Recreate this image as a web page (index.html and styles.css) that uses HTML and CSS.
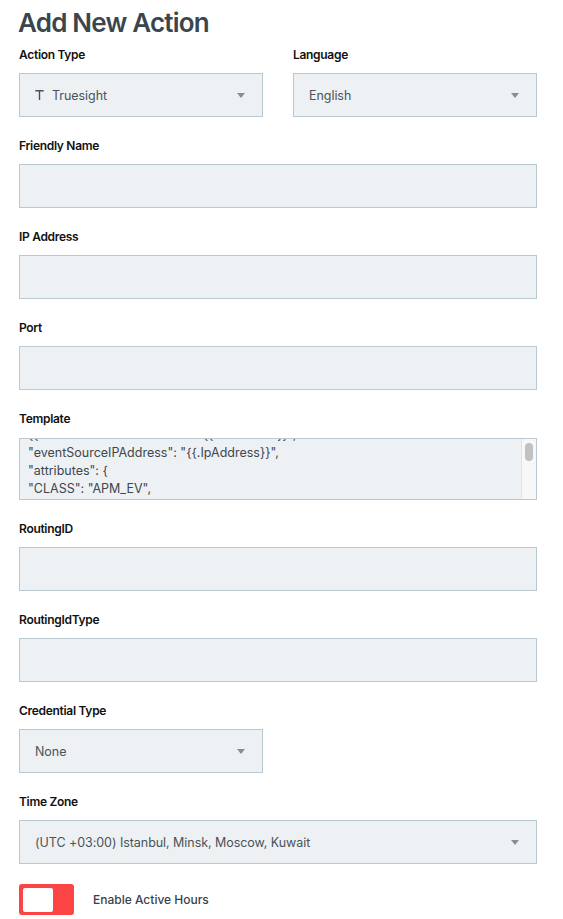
FILE: index.html
```html
<!DOCTYPE html>
<html>
<head>
<meta charset="utf-8">
<link rel="stylesheet" href="styles.css">
</head>
<body>
<div class="page">
  <h1 class="title">Add New Action</h1>
  <div class="form">
    <div class="row two">
      <div class="field">
        <div class="label">Action Type</div>
        <div class="control select">
          <span class="val"><svg class="ticon" width="9" height="10" viewBox="0 0 9 10"><path d="M0.3 0.8H8.7M4.5 0.8V10" stroke="#4a5158" stroke-width="1.4" fill="none"/></svg>Truesight</span>
          <span class="caret"></span>
        </div>
      </div>
      <div class="field">
        <div class="label">Language</div>
        <div class="control select">
          <span class="val">English</span>
          <span class="caret"></span>
        </div>
      </div>
    </div>
    <div class="field">
      <div class="label">Friendly Name</div>
      <div class="control"></div>
    </div>
    <div class="field">
      <div class="label">IP Address</div>
      <div class="control"></div>
    </div>
    <div class="field">
      <div class="label">Port</div>
      <div class="control"></div>
    </div>
    <div class="field">
      <div class="label">Template</div>
      <div class="textarea">
        <div class="ta-view">
          <div class="ta-content">
            <div>{{ "eventSourceHostName": "{{.Hostname}}",</div>
            <div>"eventSourceIPAddress": "{{.IpAddress}}",</div>
            <div>"attributes": {</div>
            <div>"CLASS": "APM_EV",</div>
          </div>
        </div>
        <div class="ta-scroll"><div class="thumb"></div></div>
      </div>
    </div>
    <div class="field">
      <div class="label">RoutingID</div>
      <div class="control"></div>
    </div>
    <div class="field">
      <div class="label">RoutingIdType</div>
      <div class="control"></div>
    </div>
    <div class="field half">
      <div class="label">Credential Type</div>
      <div class="control select">
        <span class="val">None</span>
        <span class="caret"></span>
      </div>
    </div>
    <div class="field">
      <div class="label">Time Zone</div>
      <div class="control select">
        <span class="val">(UTC +03:00) Istanbul, Minsk, Moscow, Kuwait</span>
        <span class="caret"></span>
      </div>
    </div>
    <div class="toggle-row">
      <div class="toggle"><div class="knob"></div></div>
      <span class="toggle-label">Enable Active Hours</span>
    </div>
  </div>
</div>
</body>
</html>
```
FILE: styles.css
```css
* { box-sizing: border-box; }
html, body { margin: 0; padding: 0; background: #fff; }
body { font-family: Inter, "Noto Sans", sans-serif; }
.page { width: 518px; margin-left: 19px; padding-top: 7px; }
.title {
  margin: 0 0 8px -1px;
  font-size: 26px;
  line-height: 32px;
  font-weight: 600;
  color: #3b454d;
  letter-spacing: -0.8px;
}
.form { display: flex; flex-direction: column; gap: 21px; }
.row.two { display: grid; grid-template-columns: 244px 244px; column-gap: 30px; }
.field { display: flex; flex-direction: column; gap: 10px; }
.field.half { width: 244px; }
.label {
  font-size: 12px;
  line-height: 16px;
  font-weight: 600;
  color: #111;
  letter-spacing: -0.3px;
}
.control {
  height: 44px;
  background: #edf1f4;
  border: 1px solid #b9c8d1;
  display: flex;
  align-items: center;
  justify-content: space-between;
  padding: 0 17px 0 15px;
}
.val {
  display: flex;
  align-items: center;
  font-size: 12.5px;
  color: #4b5259;
  letter-spacing: -0.05px;
}
.ticon { margin-right: 8px; margin-top: -1px; }
.caret {
  width: 0; height: 0;
  border-left: 4px solid transparent;
  border-right: 4px solid transparent;
  border-top: 5px solid #8a8d90;
}
.textarea {
  height: 62px;
  margin-top: 1px;
  background: #edf1f4;
  border: 1px solid #b9c8d1;
  display: flex;
}
.ta-view { flex: 1; overflow: hidden; padding-left: 8px; }
.ta-content {
  margin-top: -13px;
  font-size: 12.5px;
  line-height: 18px;
  color: #3f464d;
}
.ta-scroll {
  width: 15px;
  background: #f7f7f7;
  border-left: 1px solid #e3e3e3;
  padding: 4px 0 0 3px;
}
.thumb { width: 8px; height: 18px; border-radius: 4px; background: #c1c1c1; }
.toggle-row { display: flex; align-items: center; gap: 19px; margin-top: -1px; }
.toggle {
  width: 55px; height: 31px;
  background: #fd4445;
  border-radius: 3px;
  padding: 4px 0 0 4px;
}
.knob { width: 30px; height: 24px; background: #fff; border-radius: 2px; }
.toggle-label { font-size: 12px; font-weight: 500; color: #38424b; }
```
